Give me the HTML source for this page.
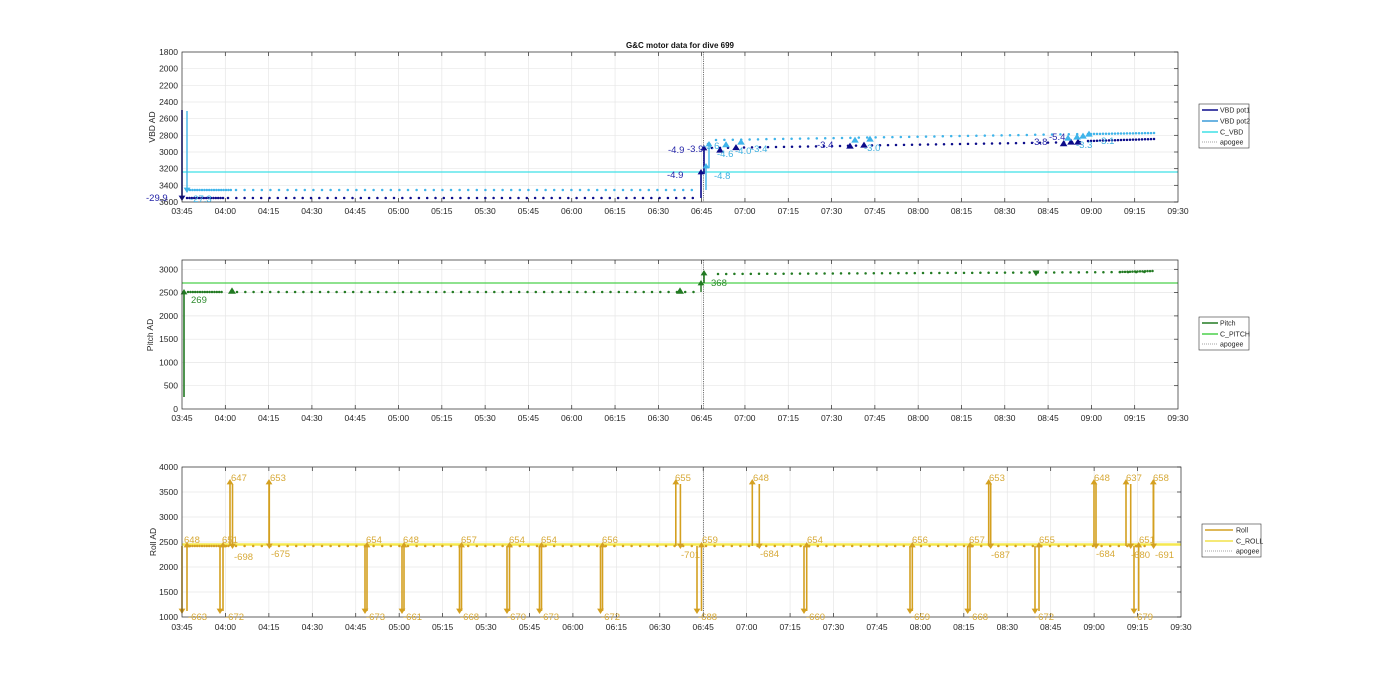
<!DOCTYPE html>
<html><head><meta charset="utf-8"><style>
html,body{margin:0;padding:0;background:#fff;}
svg{display:block;font-family:"Liberation Sans",sans-serif;}
.t{font-size:8.5px;fill:#262626;}
.lg{font-size:7px;fill:#262626;}
</style></head><body>
<svg id="s" width="1400" height="693" viewBox="0 0 1400 693" xmlns="http://www.w3.org/2000/svg">
<rect width="1400" height="693" fill="#fff"/>
<g id="grid"></g>
<g id="data"></g>
<rect x="182" y="52" width="996" height="150" fill="none" stroke="#262626" stroke-width="0.7"/>
<rect x="182" y="260" width="996" height="149" fill="none" stroke="#262626" stroke-width="0.7"/>
<rect x="182" y="467" width="999" height="150" fill="none" stroke="#262626" stroke-width="0.7"/>
<text x="680" y="48" text-anchor="middle" style="font-size:8px;font-weight:bold;fill:#111">G&amp;C motor data for dive 699</text>
<text class="t" transform="translate(155,127) rotate(-90)" text-anchor="middle">VBD AD</text>
<text class="t" transform="translate(153,335) rotate(-90)" text-anchor="middle">Pitch AD</text>
<text class="t" transform="translate(156,542) rotate(-90)" text-anchor="middle">Roll AD</text>
<g class="t" text-anchor="end">
<text x="178" y="55">1800</text><text x="178" y="71.7">2000</text><text x="178" y="88.3">2200</text><text x="178" y="105">2400</text><text x="178" y="121.7">2600</text><text x="178" y="138.3">2800</text><text x="178" y="155">3000</text><text x="178" y="171.7">3200</text><text x="178" y="188.3">3400</text><text x="178" y="205">3600</text>
<text x="178" y="272.3">3000</text><text x="178" y="295.6">2500</text><text x="178" y="318.9">2000</text><text x="178" y="342.2">1500</text><text x="178" y="365.4">1000</text><text x="178" y="388.7">500</text><text x="178" y="412">0</text>
<text x="178" y="470">4000</text><text x="178" y="495">3500</text><text x="178" y="520">3000</text><text x="178" y="545">2500</text><text x="178" y="570">2000</text><text x="178" y="595">1500</text><text x="178" y="620">1000</text>
</g>
<g class="t" text-anchor="middle">
<text x="182" y="214">03:45</text><text x="225.3" y="214">04:00</text><text x="268.6" y="214">04:15</text><text x="311.9" y="214">04:30</text><text x="355.2" y="214">04:45</text><text x="398.5" y="214">05:00</text><text x="441.8" y="214">05:15</text><text x="485.1" y="214">05:30</text><text x="528.4" y="214">05:45</text><text x="571.7" y="214">06:00</text><text x="615" y="214">06:15</text><text x="658.3" y="214">06:30</text><text x="701.6" y="214">06:45</text><text x="744.9" y="214">07:00</text><text x="788.3" y="214">07:15</text><text x="831.6" y="214">07:30</text><text x="874.9" y="214">07:45</text><text x="918.2" y="214">08:00</text><text x="961.5" y="214">08:15</text><text x="1004.8" y="214">08:30</text><text x="1048.1" y="214">08:45</text><text x="1091.4" y="214">09:00</text><text x="1134.7" y="214">09:15</text><text x="1178" y="214">09:30</text>
<text x="182" y="421">03:45</text><text x="225.3" y="421">04:00</text><text x="268.6" y="421">04:15</text><text x="311.9" y="421">04:30</text><text x="355.2" y="421">04:45</text><text x="398.5" y="421">05:00</text><text x="441.8" y="421">05:15</text><text x="485.1" y="421">05:30</text><text x="528.4" y="421">05:45</text><text x="571.7" y="421">06:00</text><text x="615" y="421">06:15</text><text x="658.3" y="421">06:30</text><text x="701.6" y="421">06:45</text><text x="744.9" y="421">07:00</text><text x="788.3" y="421">07:15</text><text x="831.6" y="421">07:30</text><text x="874.9" y="421">07:45</text><text x="918.2" y="421">08:00</text><text x="961.5" y="421">08:15</text><text x="1004.8" y="421">08:30</text><text x="1048.1" y="421">08:45</text><text x="1091.4" y="421">09:00</text><text x="1134.7" y="421">09:15</text><text x="1178" y="421">09:30</text>
<text x="182" y="630">03:45</text><text x="225.4" y="630">04:00</text><text x="268.9" y="630">04:15</text><text x="312.3" y="630">04:30</text><text x="355.7" y="630">04:45</text><text x="399.2" y="630">05:00</text><text x="442.6" y="630">05:15</text><text x="486" y="630">05:30</text><text x="529.5" y="630">05:45</text><text x="572.9" y="630">06:00</text><text x="616.4" y="630">06:15</text><text x="659.8" y="630">06:30</text><text x="703.2" y="630">06:45</text><text x="746.7" y="630">07:00</text><text x="790.1" y="630">07:15</text><text x="833.5" y="630">07:30</text><text x="877" y="630">07:45</text><text x="920.4" y="630">08:00</text><text x="963.8" y="630">08:15</text><text x="1007.3" y="630">08:30</text><text x="1050.7" y="630">08:45</text><text x="1094.1" y="630">09:00</text><text x="1137.6" y="630">09:15</text><text x="1181" y="630">09:30</text>
</g>
<g style="font-size:9.5px">
<g fill="#2424a8">
<text x="146" y="201">-29.9</text><text x="668" y="153">-4.9</text><text x="687" y="152">-3.9</text><text x="667" y="178">-4.9</text><text x="817" y="148">-3.4</text><text x="1031" y="145">-3.8</text><text x="1049" y="140">-5.4</text>
</g>
<g fill="#3fb0e0">
<text x="190" y="202">-27.3</text><text x="703" y="149">-3.6</text><text x="717" y="157">-4.6</text><text x="735" y="154">-4.0</text><text x="751" y="152">-3.4</text><text x="864" y="151">-3.0</text><text x="714" y="179">-4.8</text><text x="1076" y="148">-3.3</text><text x="1098" y="144">-3.1</text>
</g>
<g fill="#2e8b2e"><text x="191" y="303">269</text><text x="711" y="286">368</text></g>
<g fill="#d7a937">
<text x="184" y="543">648</text><text x="188" y="620">-663</text>
<text x="222" y="543">651</text><text x="225" y="620">-672</text>
<text x="231" y="481">647</text><text x="234" y="560">-698</text>
<text x="270" y="481">653</text><text x="271" y="557">-675</text>
<text x="366" y="543">654</text><text x="366" y="620">-673</text>
<text x="403" y="543">648</text><text x="403" y="620">-661</text>
<text x="461" y="543">657</text><text x="460" y="620">-668</text>
<text x="509" y="543">654</text><text x="507" y="620">-670</text>
<text x="541" y="543">654</text><text x="540" y="620">-673</text>
<text x="602" y="543">656</text><text x="601" y="620">-672</text>
<text x="675" y="481">655</text><text x="681" y="558">-701</text>
<text x="702" y="543">659</text><text x="698" y="620">-688</text>
<text x="753" y="481">648</text><text x="760" y="557">-684</text>
<text x="807" y="543">654</text><text x="806" y="620">-660</text>
<text x="912" y="543">656</text><text x="911" y="620">-659</text>
<text x="969" y="543">657</text><text x="969" y="620">-668</text>
<text x="989" y="481">653</text><text x="991" y="558">-687</text>
<text x="1039" y="543">655</text><text x="1035" y="620">-672</text>
<text x="1094" y="481">648</text><text x="1096" y="557">-684</text>
<text x="1126" y="481">637</text><text x="1131" y="558">-680</text>
<text x="1139" y="543">651</text><text x="1134" y="620">-679</text>
<text x="1153" y="481">658</text><text x="1155" y="558">-691</text>
</g>
</g>
<g class="lg">
<rect x="1199" y="104" width="50" height="44" fill="#fff" stroke="#333" stroke-width="0.6"/>
<line x1="1202" y1="110" x2="1218" y2="110" stroke="#0b0b8a" stroke-width="1.5"/><text x="1220" y="112.5">VBD pot1</text>
<line x1="1202" y1="121" x2="1218" y2="121" stroke="#3a9ad9" stroke-width="1.5"/><text x="1220" y="123.5">VBD pot2</text>
<line x1="1202" y1="132" x2="1218" y2="132" stroke="#3fe0e6" stroke-width="1.5"/><text x="1220" y="134.5">C_VBD</text>
<line x1="1202" y1="142" x2="1218" y2="142" stroke="#444" stroke-width="0.6" stroke-dasharray="1,1"/><text x="1220" y="144.5">apogee</text>
<rect x="1199" y="317" width="50" height="33" fill="#fff" stroke="#333" stroke-width="0.6"/>
<line x1="1202" y1="323" x2="1218" y2="323" stroke="#227a22" stroke-width="1.5"/><text x="1220" y="325.5">Pitch</text>
<line x1="1202" y1="334" x2="1218" y2="334" stroke="#4ad04a" stroke-width="1.5"/><text x="1220" y="336.5">C_PITCH</text>
<line x1="1202" y1="344" x2="1218" y2="344" stroke="#444" stroke-width="0.6" stroke-dasharray="1,1"/><text x="1220" y="346.5">apogee</text>
<rect x="1202" y="524" width="59" height="33" fill="#fff" stroke="#333" stroke-width="0.6"/>
<line x1="1205" y1="530" x2="1233" y2="530" stroke="#d4a020" stroke-width="1.5"/><text x="1236" y="532.5">Roll</text>
<line x1="1205" y1="541" x2="1233" y2="541" stroke="#f2e24a" stroke-width="1.5"/><text x="1236" y="543.5">C_ROLL</text>
<line x1="1205" y1="551" x2="1233" y2="551" stroke="#444" stroke-width="0.6" stroke-dasharray="1,1"/><text x="1236" y="553.5">apogee</text>
</g>
</svg>
<script>
(function(){
var NS="http://www.w3.org/2000/svg",G=document.getElementById('grid'),D=document.getElementById('data');
function el(p,n,a){var e=document.createElementNS(NS,n);for(var k in a)e.setAttribute(k,a[k]);p.appendChild(e);return e;}
function ln(p,x1,y1,x2,y2,c,w,da){var a={x1:x1,y1:y1,x2:x2,y2:y2,stroke:c,'stroke-width':w||1};if(da)a['stroke-dasharray']=da;return el(p,'line',a);}
var axes=[[182,1178,52,202,[52,68.7,85.3,102,118.7,135.3,152,168.7,185.3,202]],[182,1178,260,409,[269.3,292.6,315.9,339.2,362.4,385.7]],[182,1181,467,617,[467,492,517,542,567,592,617]]];
axes.forEach(function(a){
 var st=(a[1]-a[0])/23;
 for(var i=1;i<23;i++){var x=a[0]+i*st;ln(G,x,a[2],x,a[3],'#e6e6e6',0.7);ln(G,x,a[3],x,a[3]-4,'#262626',0.7);ln(G,x,a[2],x,a[2]+4,'#262626',0.7);}
 a[4].forEach(function(y){ln(G,a[0],y,a[1],y,'#e6e6e6',0.7);ln(G,a[1],y,a[1]-4,y,'#262626',0.7);});
 ln(G,703.5,a[2],703.5,a[3],'#555',0.8,'1.2,1');
});
function dot(x,y,c,r){el(D,'circle',{cx:x,cy:y,r:r||1.25,fill:c});}
function tri(x,y,c,up,s){s=s||3.2;var d=up?'M'+(x-s)+' '+(y+s*0.7)+'L'+(x+s)+' '+(y+s*0.7)+'L'+x+' '+(y-s*0.9)+'Z':'M'+(x-s)+' '+(y-s*0.7)+'L'+(x+s)+' '+(y-s*0.7)+'L'+x+' '+(y+s*0.9)+'Z';el(D,'path',{d:d,fill:c});}
function arr(x,y1,y2,c,w){ln(D,x,y1,x,y2,c,w||1.6);tri(x,y2,c,y2<y1,3.4);}
var dk='#0b0b8a',lb='#3fb4ea',cy='#3fe0e6';
ln(D,182,172,1178,172,cy,1.2);
function series(x0,x1,step,yA,yB,c){for(var x=x0;x<=x1;x+=step){var y=yA+(yB-yA)*(x-x0)/(x1-x0);dot(x,y,c);}}
series(187,225,2.4,198,198,dk);series(228,700,8.3,198,198,dk);
series(190,232,2.4,190,190,lb);series(236,698,8.6,190,190,lb);
series(712,1085,8,148,142,dk);series(1088,1155,3,141,139,dk);
series(716,1085,8.4,140,134,lb);series(1088,1156,3,134,133,lb);
arr(182,110,198,dk,1.6);arr(187,111,190,lb,1.4);
arr(701,198,172,dk);arr(704,174,148,dk);arr(706,190,166,lb,1.4);arr(709,168,144,lb,1.4);
[[720,150],[736,147.5],[850,146],[864,145],[1063.6,143.6],[1071,142],[1078,142]].forEach(function(p){tri(p[0],p[1],dk,1,3.8);});
[[726,144.6],[741,142],[855,140],[870,139],[1068,138],[1077,137],[1083,136],[1089,134]].forEach(function(p){tri(p[0],p[1],lb,1,3.8);});
var gd='#227a22',gl='#4ad04a';
ln(D,182,283,1178,283,gl,1.2);
series(188,222,2.4,292,292,gd);series(237,700,8.3,292,292,gd);
series(718,1150,8.2,274,272,gd);series(1120,1153,2.5,272,271,gd);
arr(184,397,292,gd,1.6);tri(232,291,gd,1,4);tri(680,291,gd,1,4);
arr(701,292,283,gd,1.4);arr(704,283,273,gd,1.6);tri(1036,273,gd,0,3.6);
var rd='#d4a020',ry='#f5e84f';
ln(D,182,544.5,1181,544.5,ry,2.6);
series(190,230,2.4,546,546,rd);series(236,700,8.6,546,546,rd);series(706,1150,8.6,546,546,rd);
var Y0=546,YL=611,YH=482;
[[182,187],[220,223],[365,367],[402,404],[459.5,461.5],[507,509.5],[539.5,541.5],[600.5,602.5],[697,701.5],[804,806.7],[910,912.3],[967.7,970],[1035,1039],[1134,1138.7]].forEach(function(p){arr(p[0],Y0,YL,rd);arr(p[1],YL,Y0-1,rd);});
[[230,232.5],[269,269.3],[675.8,680.4],[752.3,759.3],[988.7,990.7],[1094,1096],[1126,1130.7],[1153.3,1153.6]].forEach(function(p){arr(p[0],Y0,YH,rd);arr(p[1],YH+2,Y0,rd);});
})();
</script>
</body></html>
